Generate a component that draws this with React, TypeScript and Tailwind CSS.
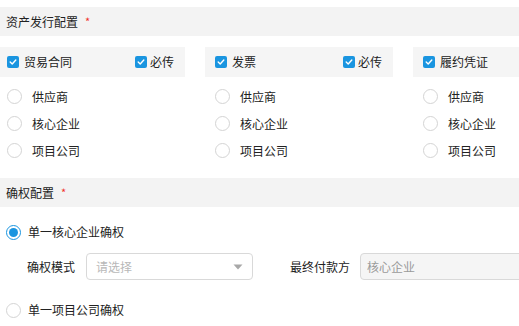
import React from 'react';

const Check = () => (
    <span className="w-[12px] h-[12px] rounded-[2px] bg-[#1a95e0] flex items-center justify-center shrink-0">
        <svg width="8" height="8" viewBox="0 0 8 8" fill="none">
            <path d="M1.2 4.1L3.2 6L6.8 2" stroke="#fff" strokeWidth="1.4" strokeLinecap="round" strokeLinejoin="round" />
        </svg>
    </span>
);

const Radio = ({ checked = false }: { checked?: boolean }) =>
    checked ? (
        <span className="w-[15px] h-[15px] rounded-full border border-[#1a95e0] p-[2px] bg-white shrink-0 flex">
            <span className="flex-1 rounded-full bg-[#1a95e0]"></span>
        </span>
    ) : (
        <span className="w-[15px] h-[15px] rounded-full border border-[#d4d4d4] bg-white shrink-0"></span>
    );

const SectionHeader = ({ title }: { title: string }) => (
    <div className="h-[29px] bg-[#f3f3f3] flex items-center pl-[6px] text-[12px] text-[#222]">
        {title}
        <span className="text-[#f0312b] ml-[7px] text-[11px]">*</span>
    </div>
);

interface Doc {
    name: string;
    required: boolean;
}

const docs: Doc[] = [
    { name: '贸易合同', required: true },
    { name: '发票', required: true },
    { name: '履约凭证', required: false },
];

const parties = ['供应商', '核心企业', '项目公司'];

const DocCard = ({ doc }: { doc: Doc }) => (
    <div className="w-[188px] shrink-0">
        <div className="h-[30px] bg-[#f5f5f5] flex items-center px-[10px] text-[12px] text-[#222]">
            <Check />
            <span className="ml-[5px] flex-1">{doc.name}</span>
            {doc.required && (
                <span className="flex items-center gap-[3px] mr-[1px]">
                    <Check />
                    必传
                </span>
            )}
        </div>
        <div className="pt-[6px]">
            {parties.map((p) => (
                <div key={p} className="h-[27px] flex items-center pl-[10px] text-[12px] text-[#222]">
                    <Radio />
                    <span className="ml-[10px]">{p}</span>
                </div>
            ))}
        </div>
    </div>
);

export default function App() {
    return (
        <div className="w-[519px] h-[326px] overflow-hidden bg-white pt-[7px]" style={{ fontFamily: '"Noto Sans CJK SC", "Noto Sans", sans-serif' }}>
            <SectionHeader title="资产发行配置" />
            <div className="flex gap-[20px] ml-[-3px] mt-[11px]">
                {docs.map((d) => (
                    <DocCard key={d.name} doc={d} />
                ))}
            </div>
            <div className="mt-[14px]">
                <SectionHeader title="确权配置" />
            </div>
            <div className="flex items-center h-[20px] mt-[15px] pl-[6px] text-[12px] text-[#222]">
                <Radio checked />
                <span className="ml-[7px]">单一核心企业确权</span>
            </div>
            <div className="flex items-center mt-[11px] pl-[27px] text-[12px] text-[#222]">
                <span className="w-[59px] shrink-0">确权模式</span>
                <div className="w-[167px] h-[27px] shrink-0 border border-[#d9d9d9] rounded-[4px] flex items-center pl-[9px] pr-[9px] text-[#b8b8b8]">
                    <span className="flex-1">请选择</span>
                    <svg width="10" height="6" viewBox="0 0 10 6">
                        <path d="M0.5 0.5H9.5L5 5.5Z" fill="#a8a8a8" />
                    </svg>
                </div>
                <span className="ml-[37px] w-[70px] shrink-0">最终付款方</span>
                <div className="w-[170px] h-[27px] border border-[#d9d9d9] rounded-[4px] bg-[#f5f5f5] flex items-center pl-[6px] text-[#9a9a9a] shrink-0">
                    核心企业
                </div>
            </div>
            <div className="flex items-center h-[20px] mt-[20px] pl-[6px] text-[12px] text-[#222]">
                <Radio />
                <span className="ml-[7px]">单一项目公司确权</span>
            </div>
        </div>
    );
}
